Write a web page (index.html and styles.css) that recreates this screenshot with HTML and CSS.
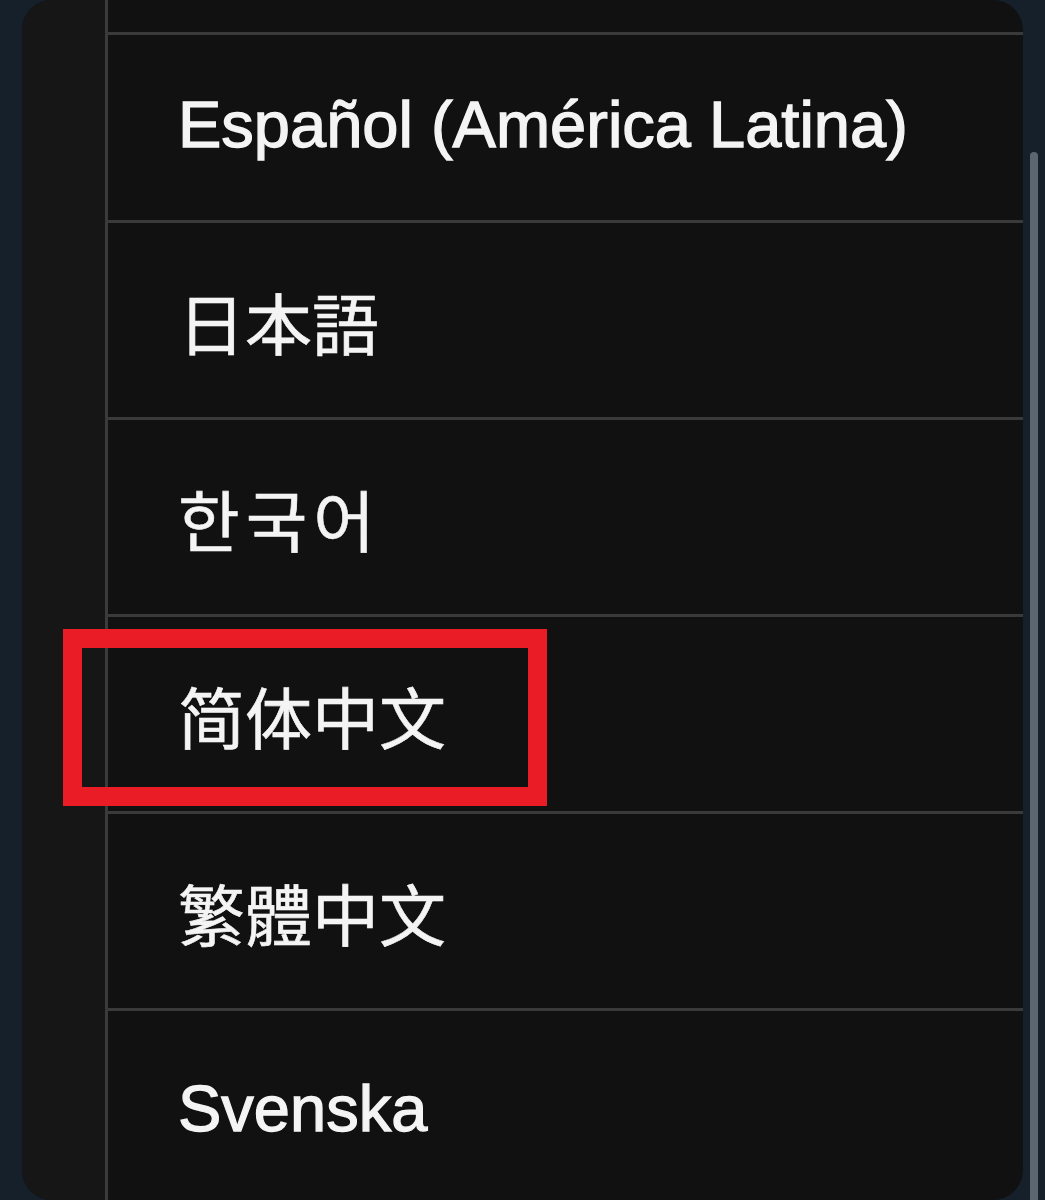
FILE: index.html
```html
<!DOCTYPE html>
<html lang="en">
<head>
  <meta charset="UTF-8" />
  <meta name="viewport" content="width=device-width, initial-scale=1.0"/>
  <title>Language</title>
  <link rel="stylesheet" href="styles.css">
</head>
<body>

  <div class="panel">
    <div class="gutter"></div>

    <div class="list">
      <div class="row row-top"></div>
      <div class="row row-first">Español (América Latina)</div>
      <div class="row" lang="ja">日本語</div>
      <div class="row" lang="ko">한국어</div>
      <div class="row" lang="zh-Hans">
        简体中文
        <span class="highlight"></span>
      </div>
      <div class="row" lang="zh-Hant">繁體中文</div>
      <div class="row">Svenska</div>
    </div>
  </div>

  <!-- scrollbar thumb -->
  <div class="scroll"></div>

</body>
</html>
```

FILE: styles.css
```css
body {
  margin: 0;
  height: 1200px;
  overflow: hidden;
  background-color: #15202b;
  font-family: "Liberation Sans", Arial, "Noto Sans CJK SC", sans-serif;
  display: flex;
  align-items: flex-start;
}

.panel {
  margin-left: 22px;
  width: 1001px;
  height: 1200px;
  border-radius: 30px;
  overflow: hidden;
  display: flex;
  background-color: #111111;
}

.gutter {
  width: 83px;
  background-color: #161616;
  border-right: 3px solid #3b3b3b;
}

.list {
  flex: 1;
  display: flex;
  flex-direction: column;
}

.row {
  position: relative;
  flex: none;
  height: 194px;
  border-top: 3px solid #3a3a3a;
  display: flex;
  align-items: center;
  padding-left: 70px;
  color: #f4f4f4;
  font-size: 65px;
  -webkit-text-stroke: 1.3px #f4f4f4;
}

.row-top {
  height: 32px;
  border-top: none;
}

.row-first {
  box-sizing: border-box;
  height: 188px;
  padding-bottom: 6px;
}

.row[lang="ja"] {
  font-family: "Noto Sans CJK JP", sans-serif;
  font-size: 67px;
  -webkit-text-stroke: 0.6px #f4f4f4;
}

.row[lang="ko"] {
  font-family: "Noto Sans CJK KR", sans-serif;
  font-size: 67px;
  letter-spacing: 6px;
  -webkit-text-stroke: 0.6px #f4f4f4;
}

.row[lang="zh-Hans"] {
  font-family: "Noto Sans CJK SC", sans-serif;
  font-size: 67px;
  -webkit-text-stroke: 0.6px #f4f4f4;
}

.row[lang="zh-Hant"] {
  font-family: "Noto Sans CJK TC", sans-serif;
  font-size: 67px;
  -webkit-text-stroke: 0.6px #f4f4f4;
}

.highlight {
  position: absolute;
  left: -45px;
  top: 12px;
  width: 446px;
  height: 139px;
  border: 19px solid #ea1c25;
}

.scroll {
  margin-left: 7px;
  margin-top: 152px;
  width: 8px;
  height: 1048px;
  background-color: #5b6670;
  border-radius: 4px 4px 0 0;
}
```
